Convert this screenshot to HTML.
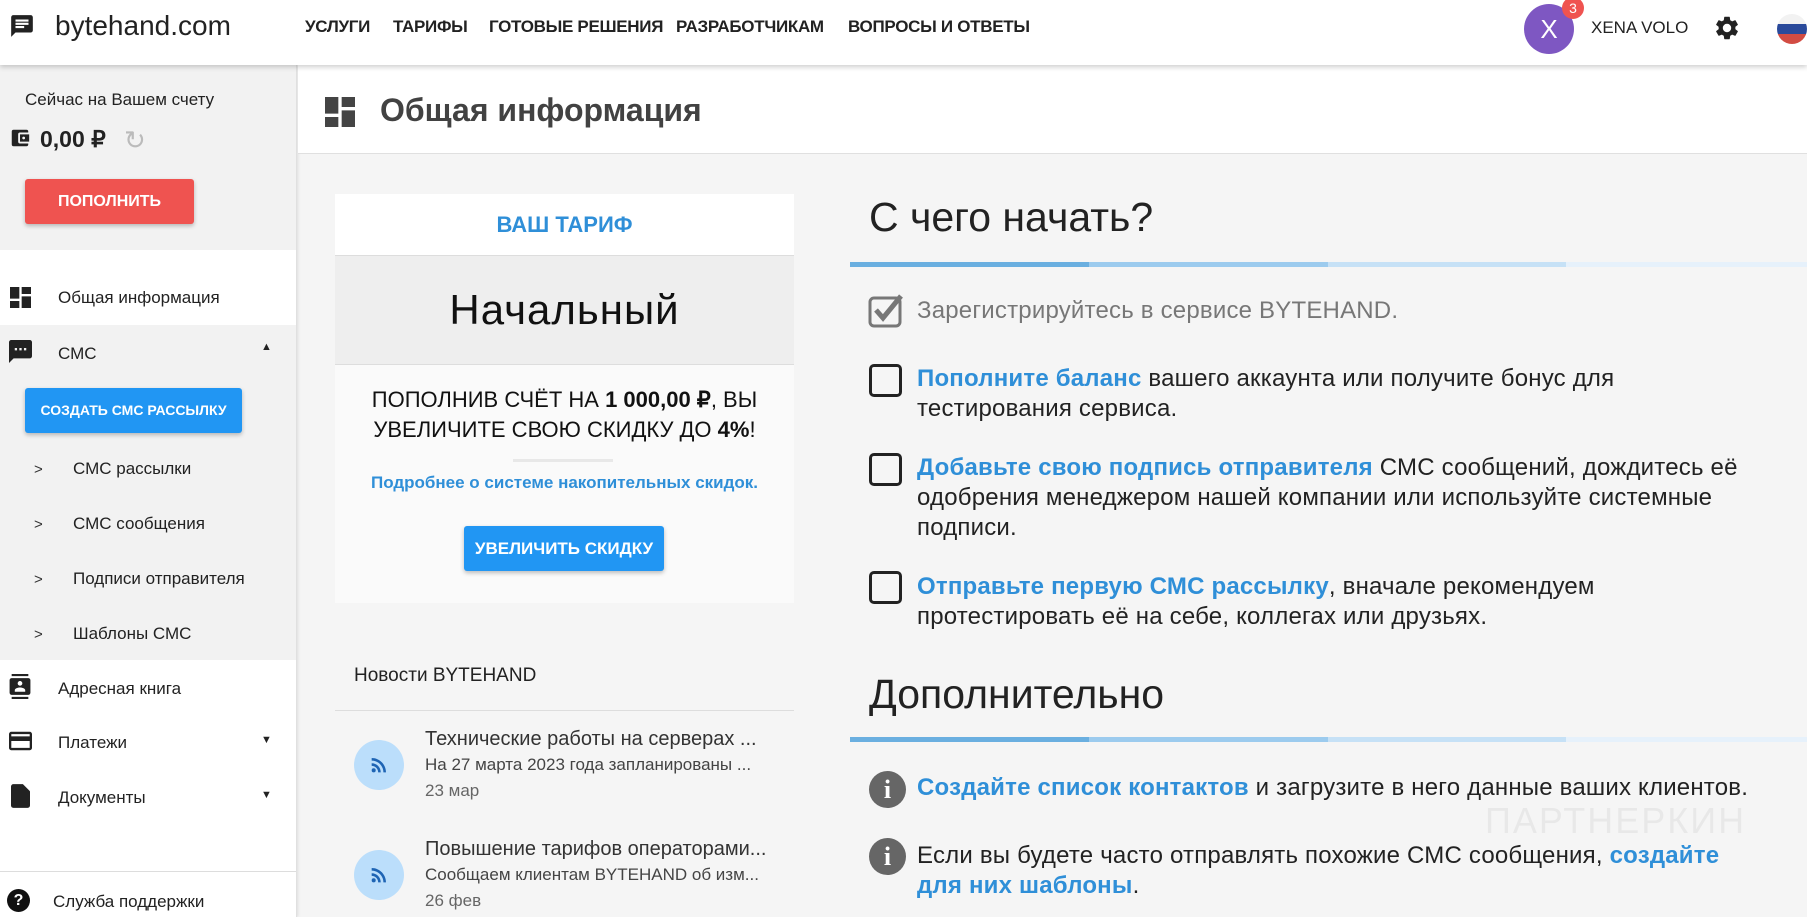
<!DOCTYPE html>
<html><head><meta charset="utf-8"><style>
*{margin:0;padding:0;box-sizing:border-box}
body{width:1807px;height:917px;overflow:hidden;background:#f5f5f5;font-family:"Liberation Sans","Noto Sans CJK SC",sans-serif;color:#212121;position:relative}
.a{position:absolute;white-space:nowrap}
.hdr{position:absolute;left:0;top:0;width:1807px;height:65px;background:#fff;box-shadow:0 2px 5px rgba(0,0,0,.2);z-index:3}
.nav{font-size:17px;font-weight:bold;top:17px;color:#222;letter-spacing:-.3px}
.side{position:absolute;left:0;top:65px;width:297px;height:852px;background:#fff;border-right:1px solid #e0e0e0;box-shadow:1px 0 3px rgba(0,0,0,.1)}
.mi{font-size:17px;color:#222;left:58px}
.sub{font-size:17px;color:#222;left:73px}
.chev{left:34px;font-size:15px;color:#333}
.blue{color:#2f8fd8;font-weight:bold}
.rt{font-size:24px;line-height:30px;color:#222;letter-spacing:.2px}
.seg{position:absolute;height:5px}
</style></head><body>
<div class="hdr">
<svg class="a" style="left:9px;top:13px" width="26" height="26" viewBox="0 0 24 24"><path d="M20 2H4c-1.1 0-2 .9-2 2v18l4-4h14c1.1 0 2-.9 2-2V4c0-1.1-.9-2-2-2zM6 9h12v2H6zm8 5H6v-2h8zm4-6H6V6h12z" fill="#222"/></svg>
<div class="a" style="left:55px;top:10px;font-size:28px;color:#222">bytehand.com</div>
<div class="a nav" style="left:305px">УСЛУГИ</div>
<div class="a nav" style="left:393px">ТАРИФЫ</div>
<div class="a nav" style="left:489px">ГОТОВЫЕ РЕШЕНИЯ</div>
<div class="a nav" style="left:676px">РАЗРАБОТЧИКАМ</div>
<div class="a nav" style="left:848px">ВОПРОСЫ И ОТВЕТЫ</div>
<div class="a" style="left:1524px;top:4px;width:50px;height:50px;border-radius:50%;background:#7e57c2;color:#fff;font-size:26px;text-align:center;line-height:50px">X</div>
<div class="a" style="left:1562px;top:-3px;width:22px;height:22px;border-radius:50%;background:#ef5350;color:#fff;font-size:14px;text-align:center;line-height:22px">3</div>
<div class="a" style="left:1591px;top:18px;font-size:17px;color:#222">XENA VOLO</div>
<svg class="a" style="left:1713px;top:14px" width="28" height="28" viewBox="0 0 24 24"><path fill="#222" d="M19.14 12.94c.04-.3.06-.61.06-.94s-.02-.64-.07-.94l2.03-1.58a.5.5 0 0 0 .12-.61l-1.920-3.32a.5.5 0 0 0-.59-.22l-2.39.96c-.5-.38-1.03-.7-1.62-.94l-.36-2.54a.48.48 0 0 0-.48-.41h-3.84a.48.48 0 0 0-.47.41l-.36 2.54c-.59.24-1.13.57-1.62.94l-2.39-.96a.48.48 0 0 0-.59.22L2.74 8.87a.47.47 0 0 0 .12.61l2.03 1.58c-.05.3-.09.63-.09.94s.2.64.07.94l-2.03 1.58a.5.5 0 0 0-.12.61l1.92 3.32c.12.22.37.29.59.22l2.39-.96c.5.38 1.03.7 1.62.94l.36 2.54c.05.24.24.41.48.41h3.84c.24 0 .44-.17.47-.41l.36-2.54c.59-.24 1.13-.56 1.62-.94l2.39.96c.22.08.47 0 .59-.22l1.92-3.32a.47.47 0 0 0-.12-.61zM12 15.6A3.6 3.6 0 1 1 12 8.4a3.6 3.6 0 0 1 0 7.2z"/></svg>
<div class="a" style="left:1777px;top:14px;width:30px;height:30px;border-radius:50%;overflow:hidden;background:linear-gradient(#f2f2f2 0 33%,#2a4a9b 33% 66%,#d24c43 66%)"></div>
</div>

<div class="side">
<div class="a" style="left:0;top:0;width:296px;height:185px;background:#f2f2f2"></div>
<div class="a" style="left:25px;top:25px;font-size:17px;color:#222">Сейчас на Вашем счету</div>
<svg class="a" style="left:9px;top:62px" width="22" height="22" viewBox="0 0 24 24"><path fill="#222" d="M21 18v1a2 2 0 0 1-2 2H5a2 2 0 0 1-2-2V5a2 2 0 0 1 2-2h14a2 2 0 0 1 2 2v1h-9a2 2 0 0 0-2 2v8a2 2 0 0 0 2 2zm-9-2h10V8H12zm4-2.5a1.5 1.5 0 1 1 0-3 1.5 1.5 0 0 1 0 3z"/></svg>
<div class="a" style="left:40px;top:61px;font-size:23px;font-weight:bold;color:#222">0,00 ₽</div>
<div class="a" style="left:124px;top:60px;font-size:26px;color:#bbb">↻</div>
<div class="a" style="left:25px;top:114px;width:169px;height:45px;background:#ef5350;border-radius:3px;box-shadow:0 2px 4px rgba(0,0,0,.25);color:#fff;font-weight:bold;font-size:16px;text-align:center;line-height:45px">ПОПОЛНИТЬ</div>
<div class="a" style="left:0;top:260px;width:296px;height:335px;background:#f2f2f2"></div>
<svg class="a" style="left:10px;top:222px" width="21" height="21" viewBox="3 3 18 18"><path fill="#222" d="M3 13h8V3H3zm0 8h8v-6H3zm10 0h8V11h-8zm0-18v6h8V3z"/></svg>
<div class="a mi" style="top:223px">Общая информация</div>
<svg class="a" style="left:9px;top:275px" width="23" height="23" viewBox="2 2 20 20"><path fill="#222" d="M20 2H4a2 2 0 0 0-2 2v18l4-4h14a2 2 0 0 0 2-2V4a2 2 0 0 0-2-2zM9 11H7V9h2zm4 0h-2V9h2zm4 0h-2V9h2z"/></svg>
<div class="a mi" style="top:279px">СМС</div>
<div class="a" style="left:261px;top:276px;font-size:11px;color:#222">▲</div>
<div class="a" style="left:25px;top:323px;width:217px;height:45px;background:#2196f3;border-radius:3px;box-shadow:0 2px 4px rgba(0,0,0,.25);color:#fff;font-weight:bold;font-size:14px;text-align:center;line-height:45px">СОЗДАТЬ СМС РАССЫЛКУ</div>
<div class="a chev" style="top:396px">&gt;</div><div class="a sub" style="top:394px">СМС рассылки</div>
<div class="a chev" style="top:451px">&gt;</div><div class="a sub" style="top:449px">СМС сообщения</div>
<div class="a chev" style="top:506px">&gt;</div><div class="a sub" style="top:504px">Подписи отправителя</div>
<div class="a chev" style="top:561px">&gt;</div><div class="a sub" style="top:559px">Шаблоны СМС</div>
<svg class="a" style="left:9px;top:609px" width="22" height="25" viewBox="2 0 20 24"><path fill="#222" d="M4 0h16v2H4zm0 22h16v2H4zM20 4H4a2 2 0 0 0-2 2v12a2 2 0 0 0 2 2h16a2 2 0 0 0 2-2V6a2 2 0 0 0-2-2zm-8 2.75a2.25 2.25 0 1 1 0 4.5 2.25 2.25 0 0 1 0-4.5zM17 17H7v-1.5c0-1.67 3.33-2.5 5-2.5s5 .83 5 2.5z"/></svg>
<div class="a mi" style="top:614px">Адресная книга</div>
<svg class="a" style="left:9px;top:666px" width="23" height="20" viewBox="2 4 20 16"><path fill="#222" d="M20 4H4a2 2 0 0 0-2 2v12a2 2 0 0 0 2 2h16a2 2 0 0 0 2-2V6a2 2 0 0 0-2-2zm0 14H4v-6h16zm0-10H4V6h16z"/></svg>
<div class="a mi" style="top:668px">Платежи</div>
<div class="a" style="left:261px;top:669px;font-size:11px;color:#222">▼</div>
<svg class="a" style="left:11px;top:719px" width="19" height="24" viewBox="4 2 16 20"><path fill="#222" d="M6 2a2 2 0 0 0-2 2v16a2 2 0 0 0 2 2h12a2 2 0 0 0 2-2V8l-6-6z"/></svg>
<div class="a mi" style="top:723px">Документы</div>
<div class="a" style="left:261px;top:724px;font-size:11px;color:#222">▼</div>
<div class="a" style="left:0;top:806px;width:296px;height:1px;background:#ddd"></div>
<div class="a" style="left:7px;top:824px;width:23px;height:23px;border-radius:50%;background:#111;color:#fff;font-weight:bold;font-size:16px;text-align:center;line-height:23px">?</div>
<div class="a mi" style="top:827px;left:53px">Служба поддержки</div>
</div>

<div class="a" style="left:298px;top:65px;width:1509px;height:89px;background:#fff;border-bottom:1px solid #e0e0e0"></div>
<svg class="a" style="left:325px;top:97px" width="30" height="30" viewBox="3 3 18 18"><path fill="#444" d="M3 13h8V3H3zm0 8h8v-6H3zm10 0h8V11h-8zm0-18v6h8V3z"/></svg>
<div class="a" style="left:380px;top:92px;font-size:32px;font-weight:bold;color:#424242">Общая информация</div>

<div class="a" style="left:335px;top:194px;width:459px;height:409px;background:#fafafa"></div>
<div class="a" style="left:335px;top:194px;width:459px;height:62px;background:#fff;border-bottom:1px solid #ddd;color:#2f8fd8;font-weight:bold;font-size:22px;text-align:center;line-height:62px">ВАШ ТАРИФ</div>
<div class="a" style="left:335px;top:256px;width:459px;height:109px;background:#eeeeee;border-bottom:1px solid #ddd;font-size:42px;font-weight:300;color:#111;text-align:center;line-height:108px;letter-spacing:1px">Начальный</div>
<div class="a" style="left:335px;top:385px;width:459px;text-align:center;font-size:22px;line-height:30px;color:#111">ПОПОЛНИВ СЧЁТ НА <b>1 000,00 ₽</b>, ВЫ<br>УВЕЛИЧИТЕ СВОЮ СКИДКУ ДО <b>4%</b>!</div>
<div class="a" style="left:513px;top:459px;width:100px;height:3px;background:#e8e8e8"></div>
<div class="a blue" style="left:335px;top:473px;width:459px;text-align:center;font-size:17px">Подробнее о системе накопительных скидок.</div>
<div class="a" style="left:464px;top:526px;width:200px;height:45px;background:#2196f3;border-radius:3px;box-shadow:0 2px 4px rgba(0,0,0,.25);color:#fff;font-weight:bold;font-size:17px;text-align:center;line-height:45px">УВЕЛИЧИТЬ СКИДКУ</div>

<div class="a" style="left:354px;top:665px;font-size:19px;color:#222">Новости BYTEHAND</div>
<div class="a" style="left:335px;top:710px;width:459px;height:1px;background:#ddd"></div>
<div class="a" style="left:354px;top:740px;width:50px;height:50px;border-radius:50%;background:#bbdefb"></div>
<svg class="a" style="left:368px;top:754px" width="22" height="22" viewBox="0 0 24 24"><circle cx="6.2" cy="17.8" r="2.2" fill="#1e64b4"/><path fill="#1e64b4" d="M4 4.4v2.8c7 0 12.8 5.7 12.8 12.8h2.8C19.6 11.4 12.6 4.4 4 4.4zm0 5.7v2.8c3.9 0 7.1 3.2 7.1 7.1h2.8c0-5.5-4.4-9.9-9.900-9.9z"/></svg>
<div class="a" style="left:425px;top:728px;font-size:20px;color:#333">Технические работы на серверах ...</div>
<div class="a" style="left:425px;top:755px;font-size:17px;color:#444">На 27 марта 2023 года запланированы ...</div>
<div class="a" style="left:425px;top:781px;font-size:17px;color:#666">23 мар</div>
<div class="a" style="left:354px;top:850px;width:50px;height:50px;border-radius:50%;background:#bbdefb"></div>
<svg class="a" style="left:368px;top:864px" width="22" height="22" viewBox="0 0 24 24"><circle cx="6.2" cy="17.8" r="2.2" fill="#1e64b4"/><path fill="#1e64b4" d="M4 4.4v2.8c7 0 12.8 5.7 12.8 12.8h2.8C19.6 11.4 12.6 4.4 4 4.4zm0 5.7v2.8c3.9 0 7.1 3.2 7.1 7.1h2.8c0-5.5-4.4-9.9-9.9-9.9z"/></svg>
<div class="a" style="left:425px;top:838px;font-size:20px;color:#333">Повышение тарифов операторами...</div>
<div class="a" style="left:425px;top:865px;font-size:17px;color:#444">Сообщаем клиентам BYTEHAND об изм...</div>
<div class="a" style="left:425px;top:891px;font-size:17px;color:#666">26 фев</div>

<div class="a" style="left:869px;top:194px;font-size:41px;color:#222">С чего начать?</div>
<div class="seg" style="left:850px;top:262px;width:239px;background:#6aafe0"></div>
<div class="seg" style="left:1089px;top:262px;width:239px;background:#9ccbee"></div>
<div class="seg" style="left:1328px;top:262px;width:238px;background:#c6e1f6"></div>
<div class="seg" style="left:1566px;top:262px;width:241px;background:#e6f1fb"></div>

<svg class="a" style="left:867px;top:293px" width="40" height="36" viewBox="0 0 40 36"><rect x="3" y="5" width="30" height="28" rx="4" fill="none" stroke="#777" stroke-width="3"/><path d="M9 17l7 8L34 3" fill="none" stroke="#777" stroke-width="5"/></svg>
<div class="a rt" style="left:917px;top:296px;color:#777">Зарегистрируйтесь в сервисе BYTEHAND.</div>

<div class="a" style="left:869px;top:364px;width:33px;height:33px;border:3px solid #222;border-radius:5px"></div>
<div class="a rt" style="left:917px;top:364px"><span class="blue">Пополните баланс</span> вашего аккаунта или получите бонус для<br>тестирования сервиса.</div>
<div class="a" style="left:869px;top:453px;width:33px;height:33px;border:3px solid #222;border-radius:5px"></div>
<div class="a rt" style="left:917px;top:453px"><span class="blue">Добавьте свою подпись отправителя</span> СМС сообщений, дождитесь её<br>одобрения менеджером нашей компании или используйте системные<br>подписи.</div>
<div class="a" style="left:869px;top:571px;width:33px;height:33px;border:3px solid #222;border-radius:5px"></div>
<div class="a rt" style="left:917px;top:572px"><span class="blue">Отправьте первую СМС рассылку</span>, вначале рекомендуем<br>протестировать её на себе, коллегах или друзьях.</div>

<div class="a" style="left:869px;top:671px;font-size:41px;color:#222">Дополнительно</div>
<div class="seg" style="left:850px;top:737px;width:239px;background:#6aafe0"></div>
<div class="seg" style="left:1089px;top:737px;width:239px;background:#9ccbee"></div>
<div class="seg" style="left:1328px;top:737px;width:238px;background:#c6e1f6"></div>
<div class="seg" style="left:1566px;top:737px;width:241px;background:#e6f1fb"></div>

<div class="a" style="left:869px;top:771px;width:37px;height:37px;border-radius:50%;background:#666;color:#fff;font-weight:bold;font-size:26px;text-align:center;line-height:37px;font-family:'Liberation Serif',serif">i</div>
<div class="a rt" style="left:917px;top:773px"><span class="blue">Создайте список контактов</span> и загрузите в него данные ваших клиентов.</div>
<div class="a" style="left:869px;top:838px;width:37px;height:37px;border-radius:50%;background:#666;color:#fff;font-weight:bold;font-size:26px;text-align:center;line-height:37px;font-family:'Liberation Serif',serif">i</div>
<div class="a rt" style="left:917px;top:841px">Если вы будете часто отправлять похожие СМС сообщения, <span class="blue">создайте</span><br><span class="blue">для них шаблоны</span>.</div>
<div class="a" style="left:1485px;top:800px;font-size:36px;color:rgba(0,0,0,.05);letter-spacing:2px">ПАРТНЕРКИН</div>
</body></html>
